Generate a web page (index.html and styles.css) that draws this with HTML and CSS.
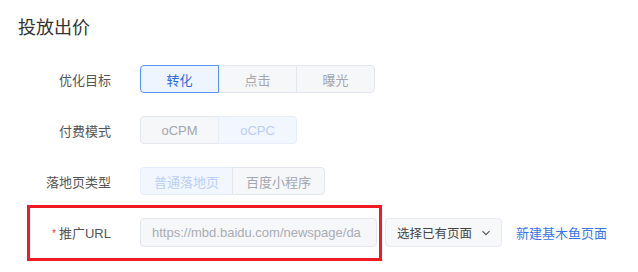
FILE: index.html
```html
<!DOCTYPE html>
<html lang="zh-CN">
<head>
    <meta charset="UTF-8">
    <meta name="viewport" content="width=device-width, initial-scale=1.0">
    <title>投放出价</title>
    <link rel="stylesheet" href="styles.css">
</head>
<body>

    <div class="panel">
        <h2 class="panel-title">投放出价</h2>

        <div class="form">
            <div class="form-item">
                <label class="form-label">优化目标</label>
                <div class="btn-group">
                    <button class="seg seg-active">转化</button>
                    <button class="seg seg-muted">点击</button>
                    <button class="seg seg-muted">曝光</button>
                </div>
            </div>

            <div class="form-item">
                <label class="form-label">付费模式</label>
                <div class="btn-group">
                    <button class="seg seg-muted">oCPM</button>
                    <button class="seg seg-active-disabled">oCPC</button>
                </div>
            </div>

            <div class="form-item">
                <label class="form-label">落地页类型</label>
                <div class="btn-group btn-group-wide">
                    <button class="seg seg-active-disabled">普通落地页</button>
                    <button class="seg seg-muted">百度小程序</button>
                </div>
            </div>

            <div class="form-item form-item-url">
                <div class="highlight"></div>
                <label class="form-label"><span class="required">*</span>推广URL</label>
                <input class="url-input" type="text" placeholder="https://mbd.baidu.com/newspage/da">
                <div class="select">
                    <span class="select-text">选择已有页面</span>
                    <svg class="chevron" width="10" height="10" viewBox="0 0 10 10"><path d="M1.5 3.2 L5 6.7 L8.5 3.2" fill="none" stroke="#555" stroke-width="1.2"/></svg>
                </div>
                <a href="#" class="link" onclick="event.preventDefault();">新建基木鱼页面</a>
            </div>
        </div>
    </div>

</body>
</html>
```

FILE: styles.css
```css
body {
    margin: 0;
    background: #fff;
    font-family: "Liberation Sans", "Noto Sans CJK SC", sans-serif;
    color: #333;
}
.panel {
    padding: 14px 18px;
}
.panel-title {
    margin: 0;
    font-size: 18px;
    font-weight: 400;
    line-height: 28px;
    color: #333;
}
.form {
    margin-top: 23px;
}
.form-item {
    display: flex;
    align-items: center;
    height: 28px;
    margin-bottom: 23px;
}
.form-item-url {
    position: relative;
    height: 29px;
}
.form-label {
    width: 93px;
    margin-right: 29px;
    text-align: right;
    font-size: 13px;
    color: #555;
}
.required {
    color: #e5383b;
    font-size: 10px;
    margin-right: 3px;
    vertical-align: 1px;
}
.btn-group {
    display: flex;
}
.seg {
    width: 79px;
    height: 28px;
    margin: 0 0 0 -1px;
    padding: 0;
    font-family: inherit;
    font-size: 13px;
    border: 1px solid #e3e6ec;
    background: #f6f7f9;
    color: #a3a6ad;
    cursor: pointer;
}
.btn-group-wide .seg {
    width: 93px;
}
.seg:first-child {
    margin-left: 0;
    border-radius: 4px 0 0 4px;
}
.seg:last-child {
    border-radius: 0 4px 4px 0;
}
.seg-active {
    position: relative;
    border-color: #5a92f6;
    background: #eff5ff;
    color: #2f6ae0;
}
.seg-active-disabled {
    border-color: #e6eefc;
    background: #f1f6ff;
    color: #b9cff7;
}
.url-input {
    box-sizing: border-box;
    width: 237px;
    height: 29px;
    padding: 0 11px;
    border: 1px solid #e3e6ec;
    border-radius: 4px;
    background: #f6f7f9;
    font-family: inherit;
    font-size: 13px;
    color: #333;
}
.url-input::placeholder {
    color: #a9acb3;
}
.select {
    box-sizing: border-box;
    display: flex;
    align-items: center;
    width: 117px;
    height: 29px;
    margin-left: 8px;
    padding: 0 10px 0 11px;
    border: 1px solid #e8eaef;
    border-radius: 4px;
    background: #f7f8fa;
    font-size: 12.5px;
    color: #444;
}
.select-text {
    flex: 1;
}
.link {
    margin-left: 14px;
    font-size: 13px;
    color: #3a76e8;
    text-decoration: none;
}
.highlight {
    position: absolute;
    left: 9px;
    top: -13px;
    width: 355px;
    height: 56px;
    box-sizing: border-box;
    border: 3px solid #ef1a22;
    pointer-events: none;
}
```
